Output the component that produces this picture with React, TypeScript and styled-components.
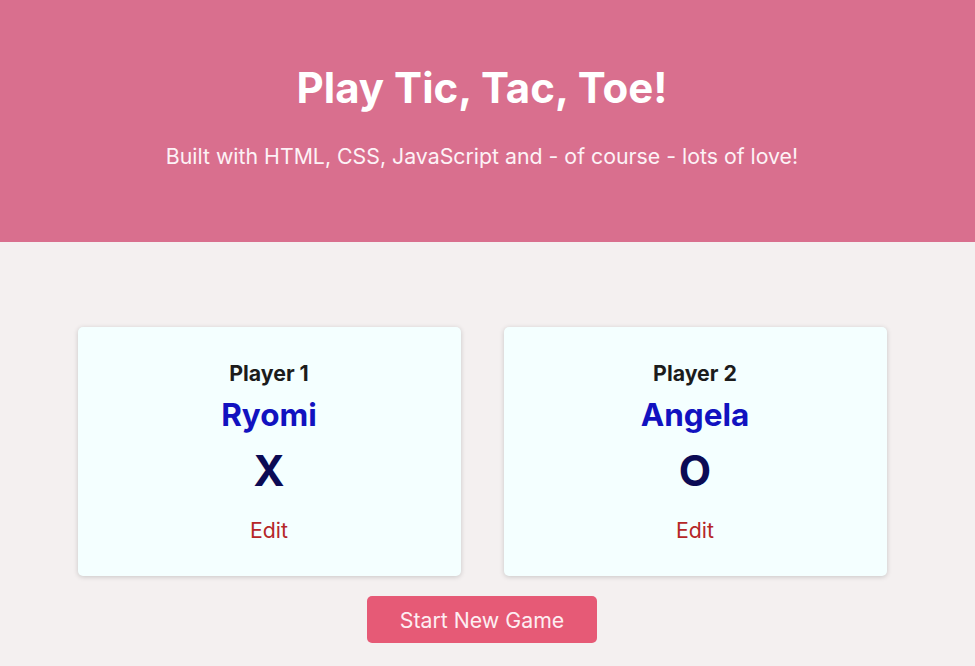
import React from "react";
import styled, { createGlobalStyle } from "styled-components";

const Global = createGlobalStyle`
  html, body { margin: 0; padding: 0; }
  body { background: #f4f0f0; font-family: Inter, "Noto Sans", sans-serif; }
`;

const Page = styled.div`
  padding-right: 11px;
`;

const Header = styled.header`
  background: #d96f8e;
  height: 242px;
  box-sizing: border-box;
  padding-top: 63px;
  text-align: center;
  color: #fff;
  margin-right: -11px;
  padding-right: 11px;
`;

const Title = styled.h1`
  margin: 0;
  font-size: 42px;
  font-weight: 700;
  line-height: 50px;
`;

const Subtitle = styled.p`
  margin: 29px 0 0;
  font-size: 21.3px;
  line-height: 28px;
  color: #fdf2f6;
`;

const Main = styled.main`
  display: flex;
  flex-direction: column;
  align-items: center;
  padding-top: 85px;
`;

const Players = styled.div`
  display: flex;
  gap: 43px;
`;

const Card = styled.section`
  width: 383px;
  height: 249px;
  box-sizing: border-box;
  background: #f4ffff;
  border-radius: 5px;
  box-shadow: 0 1px 5px rgba(0, 0, 0, 0.18);
  display: flex;
  flex-direction: column;
  align-items: center;
  padding-top: 33px;
`;

const Label = styled.div`
  font-size: 21.3px;
  font-weight: 700;
  color: #1c1c1c;
  line-height: 26px;
`;

const Name = styled.div`
  margin-top: 11px;
  font-size: 31.5px;
  font-weight: 700;
  color: #1212c0;
  line-height: 36px;
`;

const Symbol = styled.div`
  margin-top: 13px;
  font-size: 42px;
  font-weight: 700;
  color: #0b0b55;
  line-height: 50px;
`;

const Edit = styled.button`
  margin-top: 21px;
  background: none;
  border: none;
  padding: 0;
  font-family: inherit;
  font-size: 21.3px;
  color: #b52727;
  line-height: 26px;
  cursor: pointer;
`;

const StartButton = styled.button`
  margin-top: 20px;
  width: 230px;
  height: 47px;
  border: none;
  border-radius: 5px;
  background: #e65a76;
  color: #fdeef2;
  font-family: inherit;
  font-size: 21.3px;
  cursor: pointer;
`;

const players = [
  { label: "Player 1", name: "Ryomi", symbol: "X" },
  { label: "Player 2", name: "Angela", symbol: "O" },
];

export default function App() {
  return (
    <Page>
      <Global />
      <Header>
        <Title>Play Tic, Tac, Toe!</Title>
        <Subtitle>Built with HTML, CSS, JavaScript and - of course - lots of love!</Subtitle>
      </Header>
      <Main>
        <Players>
          {players.map((p) => (
            <Card key={p.label}>
              <Label>{p.label}</Label>
              <Name>{p.name}</Name>
              <Symbol>{p.symbol}</Symbol>
              <Edit>Edit</Edit>
            </Card>
          ))}
        </Players>
        <StartButton>Start New Game</StartButton>
      </Main>
    </Page>
  );
}
